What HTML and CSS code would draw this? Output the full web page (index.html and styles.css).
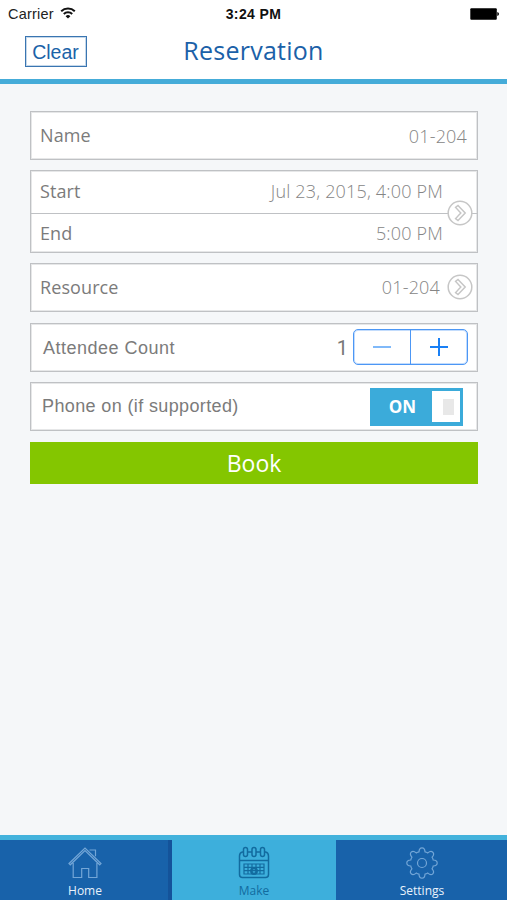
FILE: index.html
```html
<!DOCTYPE html>
<html lang="en">
<head>
<meta charset="utf-8">
<title>Reservation</title>
<link rel="stylesheet" href="styles.css">
</head>
<body>
<header class="header">
  <div class="status">
    <div class="carrier"><span>Carrier</span>
      <svg width="16" height="12" viewBox="0 0 16 12" fill="none" stroke="#111" stroke-width="2"><path d="M1.2 4.2a9.800 9.800 0 0 1 13.600 0M3.800 7a6 6 0 0 1 8.400 0"/><path d="M8 11.500 5.600 9.200a3.500 3.500 0 0 1 4.800 0z" fill="#111" stroke="none"/></svg>
    </div>
    <span class="time">3:24 PM</span>
    <svg class="battery" width="30" height="12" viewBox="0 0 30 12"><rect x="1.300" y=".3" width="26.500" height="11.400" rx="1" fill="#000"/><path d="M28.300 4q1.700.5 1.700 2t-1.700 2z"/></svg>
  </div>
  <div class="navbar">
    <button class="clear">Clear</button>
    <h1 class="title">Reservation</h1>
  </div>
</header>
<main class="form">
  <div class="card name"><span class="label">Name</span><span class="value">01-204</span></div>
  <div class="card period">
    <div class="line start"><span class="label">Start</span><span class="value">Jul 23, 2015, 4:00 PM</span></div>
    <div class="line end"><span class="label">End</span><span class="value">5:00 PM</span></div>
    <svg class="chevron over" viewBox="0 0 26 26"><circle cx="13" cy="13" r="11.800"/><path d="M8.600 7.400 11 5.500l7.200 7.500-7.200 7.500-2.400-1.900 5.200-5.600z"/></svg>
  </div>
  <div class="card resource"><span class="label">Resource</span><span class="value">01-204</span>
    <svg class="chevron" viewBox="0 0 26 26"><circle cx="13" cy="13" r="11.800"/><path d="M8.600 7.400 11 5.500l7.200 7.500-7.200 7.500-2.400-1.900 5.200-5.600z"/></svg>
  </div>
  <div class="card attendees"><span class="label system">Attendee Count</span><span class="count">1</span>
    <div class="stepper">
      <button class="step minus" aria-label="Decrease"><svg width="20" height="20" viewBox="0 0 20 20"><path d="M1 10h18"/></svg></button>
      <button class="step" aria-label="Increase"><svg width="20" height="20" viewBox="0 0 20 20"><path d="M1 10h18M10 1v18"/></svg></button>
    </div>
  </div>
  <div class="card phone"><span class="label system">Phone on (if supported)</span>
    <div class="toggle"><span class="on">ON</span><span class="knob"><span class="grip"></span></span></div>
  </div>
  <button class="book">Book</button>
</main>
<nav class="tabs">
  <a class="tab home"><svg width="36" height="34" viewBox="0 0 36 34"><path d="M2 17.500 18 2l16 15.500-1.300 1.300L18 4.600 3.300 18.800zM6.200 17v14.500h8.500v-9h7v9h8.200V17M22.500 4h6v6.200"/></svg><span>Home</span></a>
  <a class="tab make"><svg width="32" height="34" viewBox="0 0 32 34"><path d="M5.200 6H4.500Q1.500 6.500 1.500 10v18.500q0 3 3 3h23q3 0 3-3V10q0-3.500-3-4h-.7M10 6h4M18 6h4.500M1.500 14.500h29"/><rect x="5.500" y="1.500" width="4" height="9" rx="2"/><rect x="14" y="1.500" width="4" height="9" rx="2"/><rect x="22.500" y="1.500" width="4" height="9" rx="2"/><path stroke-width="1.200" d="M6 18h20v10H6zM6 21.300h20M6 24.600h20M10 18v10M14 18v10M18 18v10M22 18v10"/><circle cx="16" cy="25" r="2.800" stroke-width="2.200"/></svg><span>Make</span></a>
  <a class="tab settings"><svg width="34" height="34" viewBox="-17 -17 34 34"><path d="M-3-11.200Q-2.800-15.200 0-15.200T3-11.200Q4.300-11 5.800-10.100 8.800-12.700 10.800-10.800T10.100-5.800Q11-4.300 11.200-3 15.200-2.800 15.200 0T11.200 3Q11 4.300 10.100 5.800 12.700 8.800 10.800 10.800T5.800 10.100Q4.300 11 3 11.200 2.800 15.200 0 15.200T-3 11.200Q-4.300 11-5.800 10.100-8.800 12.700-10.800 10.800T-10.100 5.800Q-11 4.300-11.200 3-15.200 2.800-15.200 0T-11.200-3Q-11-4.300-10.100-5.800-12.700-8.800-10.800-10.800T-5.800-10.100Q-4.300-11-3-11.200z"/><circle r="4.500"/></svg><span>Settings</span></a>
</nav>
</body>
</html>
```
FILE: styles.css
```css
* { box-sizing: border-box; }
body { margin: 0; width: 507px; height: 900px; display: flex; flex-direction: column; background: #f5f7f9; font-family: "Open Sans", sans-serif; overflow: hidden; }
button { padding: 0; margin: 0; background: none; border: 0; font: inherit; }
svg { display: block; flex: none; }
.header { height: 84px; background: #fff; border-bottom: 5px solid #45acd9; }
.status { height: 28px; padding: 0 8px; display: grid; grid-template-columns: 1fr auto 1fr; align-items: center; font: 14.5px "Liberation Sans", sans-serif; color: #222; }
.carrier { display: flex; align-items: center; gap: 6px; letter-spacing: .2px; }
.carrier svg { margin-top: -2px; }
.time { font-weight: 700; font-size: 14px; letter-spacing: .4px; color: #111; }
.battery { justify-self: end; margin-top: -1px; }
.navbar { display: grid; grid-template-columns: 1fr auto 1fr; padding: 0 25px; height: 46px; align-items: center; }
.clear { width: 62px; height: 31px; border: 1px solid #3a75b1; box-shadow: inset 0 0 0 1px #c5d8ea; color: #1b63a8; font: 19.5px/30px "Liberation Sans", sans-serif; text-indent: -1px; }
.title { margin: -2px 0 0; font-size: 25px; line-height: 34px; font-weight: 400; letter-spacing: .25px; color: #1b61a8; }
.form { flex: 1; padding: 27px 29px 0 30px; }
.card { height: 49px; margin-bottom: 10.500px; padding: 0 10px 0 9px; display: flex; align-items: center; background: #fff; border: 1px solid #bfc1c4; box-shadow: inset 0 0 0 1px #e6e7e8; position: relative; }
.label { font-size: 18px; line-height: 24px; color: #7b7b7b; margin-right: auto; letter-spacing: .1px; }
.value { font-size: 18px; line-height: 24px; font-weight: 300; color: #858585; letter-spacing: .18px; }
.name .label { padding-bottom: 2px; }
.period { display: block; height: 83px; padding: 0; margin-top: -1px; }
.line { display: flex; align-items: center; padding: 0 34px 0 9px; }
.start { height: 43px; padding-bottom: 2px; border-bottom: 1px solid #bfc1c4; }
.end { height: 39px; }
.chevron { width: 26px; height: 26px; fill: #fff; stroke: #c6c6c6; stroke-width: 1.5; }
.over { position: absolute; right: 4px; top: 29px; }
.resource { padding: 0 4px 2px 9px; }
.resource .chevron { margin-left: 7px; }
.system { font-family: "Liberation Sans", sans-serif; }
.attendees { padding: 0 9px 0 12px; }
.attendees .label { padding-top: 2px; letter-spacing: .5px; }
.count { font-family: Roboto, sans-serif; font-size: 20px; color: #777; margin: 2px 5px 0 0; }
.stepper { display: flex; width: 115px; height: 36px; border: 1px solid #4c97f5; box-shadow: inset 0 0 0 1px #c3dcfc; border-radius: 5px; }
.step { flex: 1; display: flex; align-items: center; justify-content: center; }
.step svg { fill: none; stroke: #1a80f5; stroke-width: 2; }
.minus { border-right: 1px solid #4c97f5; }
.minus svg { opacity: .55; }
.phone { padding: 0 14px 0 11px; }
.phone .label { padding-bottom: 2px; letter-spacing: .37px; }
.toggle { display: flex; align-items: center; width: 93px; height: 38px; padding: 3px; background: #3babda; }
.on { flex: 1; text-align: center; color: #fff; font-size: 17px; font-weight: 700; }
.knob { width: 28px; height: 31px; background: #fff; display: flex; align-items: center; justify-content: center; }
.grip { width: 11px; height: 16px; background: #e8e8e8; margin-left: 4px; }
.book { display: block; width: 448px; height: 42px; background: #84c600; color: #fff; font-size: 23px; line-height: 42px; }
.tabs { display: grid; grid-template-columns: 172px 164px 171px; height: 65px; border-top: 5px solid #43b2dc; flex: none; }
.tab { display: flex; flex-direction: column; align-items: center; padding-top: 6px; background: #1862aa; color: #e9f2fc; font-size: 12px; line-height: 17px; font-weight: 500; }
.tab span { margin-top: 2px; }
.tab svg { fill: none; stroke: #73a6d7; stroke-width: 1.2; }
.home { border-right: 4px solid #14539a; padding-left: 2px; }
.make { background: #3dafdc; color: #126b9f; font-weight: 400; }
.make svg { stroke: #126b9f; stroke-width: 1.5; }
.settings { padding-left: 1px; }
```
